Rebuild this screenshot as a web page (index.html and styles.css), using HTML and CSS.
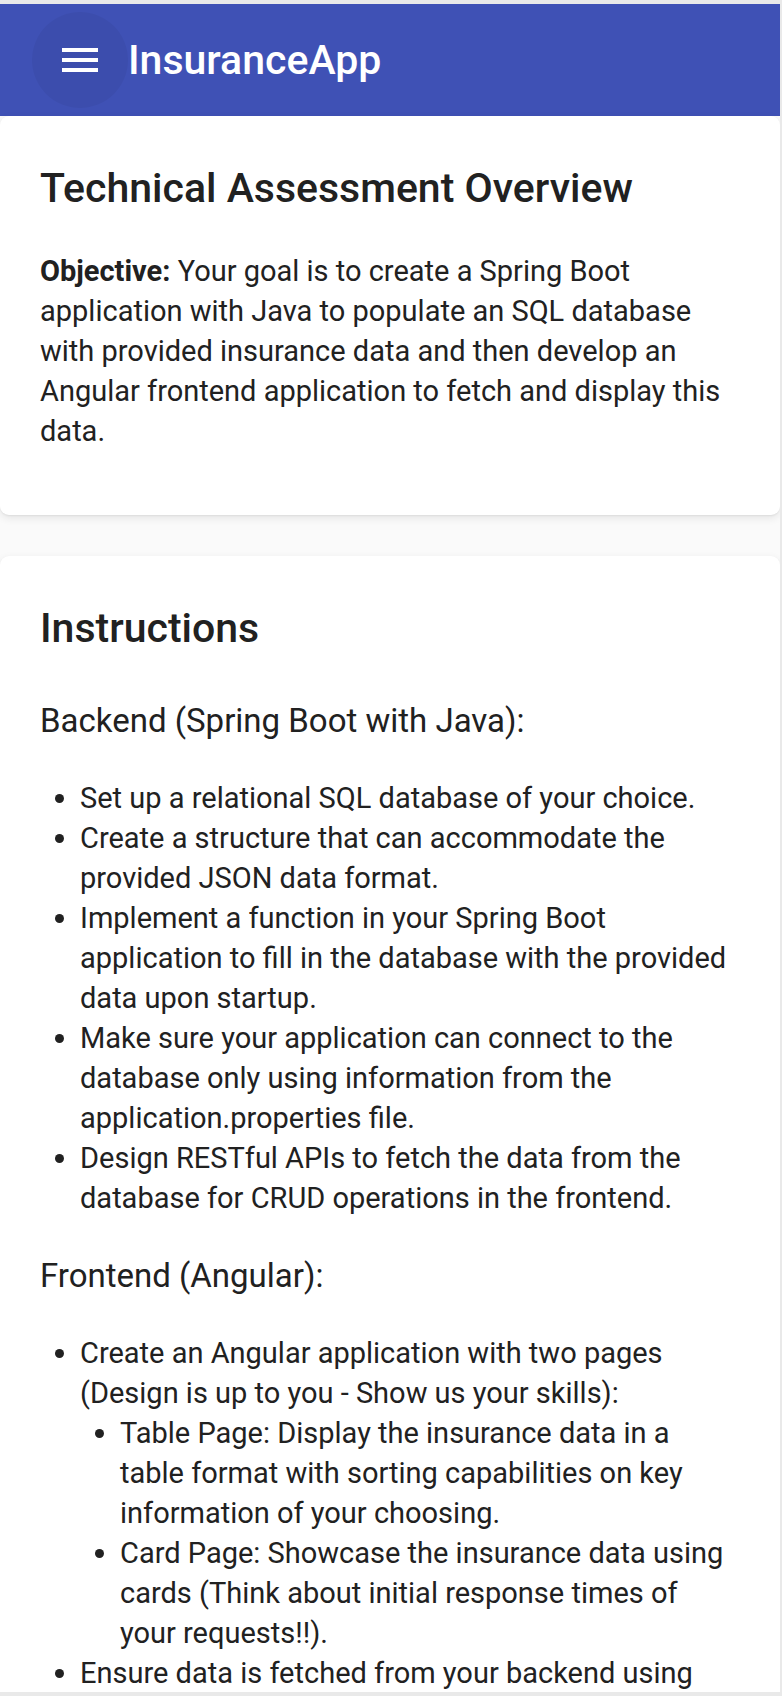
FILE: index.html
```html
<!DOCTYPE html>
<html lang="en">
<head>
<meta charset="utf-8">
<title>InsuranceApp</title>
<link rel="stylesheet" href="styles.css">
</head>
<body>
<div class="frame">
  <header class="toolbar">
    <button class="menu-btn" aria-label="Menu">
      <svg viewBox="0 0 24 24" width="48" height="48"><path fill="#fff" d="M3 18h18v-2H3v2zm0-5h18v-2H3v2zm0-7v2h18V6H3z"/></svg>
    </button>
    <span class="app-title">InsuranceApp</span>
  </header>
  <main class="content">
    <section class="card">
      <h2>Technical Assessment Overview</h2>
      <p><strong>Objective:</strong> Your goal is to create a Spring Boot application with Java to populate an SQL database with provided insurance data and then develop an Angular frontend application to fetch and display this data.</p>
    </section>
    <section class="card">
      <h2>Instructions</h2>
      <h3>Backend (Spring Boot with Java):</h3>
      <ul>
        <li>Set up a relational SQL database of your choice.</li>
        <li>Create a structure that can accommodate the provided JSON data format.</li>
        <li>Implement a function in your Spring Boot application to fill in the database with the provided data upon startup.</li>
        <li>Make sure your application can connect to the database only using information from the application.properties file.</li>
        <li>Design RESTful APIs to fetch the data from the database for CRUD operations in the frontend.</li>
      </ul>
      <h3>Frontend (Angular):</h3>
      <ul>
        <li>Create an Angular application with two pages (Design is up to you - Show us your skills):
          <ul>
            <li>Table Page: Display the insurance data in a table format with sorting capabilities on key information of your choosing.</li>
            <li>Card Page: Showcase the insurance data using cards (Think about initial response times of your requests!!).</li>
          </ul>
        </li>
        <li>Ensure data is fetched from your backend using HTTP requests and displayed correctly.</li>
        <li>Implement basic error handling and loading states.</li>
      </ul>
    </section>
  </main>
</div>
</body>
</html>
```

FILE: styles.css
```css
html, body {
  margin: 0;
  padding: 0;
  background: #e9e9e9;
}

body {
  font-family: Roboto, "Noto Sans", "Liberation Sans", sans-serif;
  color: #212121;
}

.frame {
  margin: 4px 2px 0 0;
  height: 1688px;
  overflow: hidden;
  background: #fafafa;
}

.toolbar {
  height: 112px;
  background: #3f51b5;
  display: flex;
  align-items: center;
  padding-left: 32px;
}

.menu-btn {
  width: 96px;
  height: 96px;
  border-radius: 50%;
  border: none;
  padding: 0;
  margin: 0;
  background: rgba(0, 0, 0, 0.045);
  display: flex;
  align-items: center;
  justify-content: center;
}

.menu-btn svg {
  display: block;
}

.app-title {
  color: #fff;
  font-size: 41px;
  font-weight: 500;
  line-height: 48px;
}

.content {
  display: flex;
  flex-direction: column;
  gap: 41px;
}

.card {
  background: #fff;
  border-radius: 9px;
  padding: 44px 40px 40px 40px;
  box-shadow: 0 3px 8px rgba(0, 0, 0, 0.09), 0 1px 2px rgba(0, 0, 0, 0.06);
}

.card h2 {
  font-size: 41px;
  font-weight: 500;
  line-height: 56px;
  margin: 0 0 35px;
}

.card p {
  font-size: 29px;
  line-height: 40px;
  margin: 0 0 24px;
}

.card p strong {
  font-weight: 700;
}

.card h3 {
  font-size: 33px;
  font-weight: 400;
  line-height: 40px;
  margin: 38px 0 37px;
}

.card h2 + h3 {
  margin-top: 45px;
}

.card ul {
  font-size: 29px;
  line-height: 40px;
  margin: 0;
  padding-left: 40px;
  list-style: disc;
}

.card ul ul {
  list-style: disc;
}
```
